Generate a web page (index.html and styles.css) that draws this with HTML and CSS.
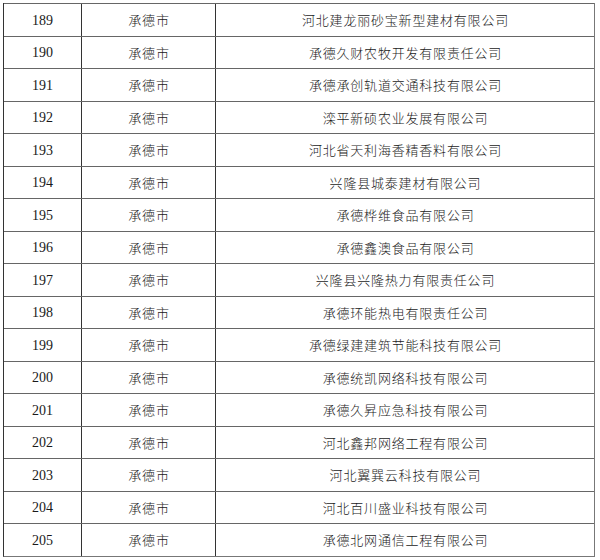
FILE: index.html
```html
<!DOCTYPE html>
<html lang="zh-CN">
<head>
<meta charset="utf-8">
<link rel="stylesheet" href="styles.css">
</head>
<body>
<div class="table">
  <div class="row"><div class="num">189</div><div class="city">承德市</div><div class="co">河北建龙丽砂宝新型建材有限公司</div></div>
  <div class="row"><div class="num">190</div><div class="city">承德市</div><div class="co">承德久财农牧开发有限责任公司</div></div>
  <div class="row"><div class="num">191</div><div class="city">承德市</div><div class="co">承德承创轨道交通科技有限公司</div></div>
  <div class="row"><div class="num">192</div><div class="city">承德市</div><div class="co">滦平新硕农业发展有限公司</div></div>
  <div class="row"><div class="num">193</div><div class="city">承德市</div><div class="co">河北省天利海香精香料有限公司</div></div>
  <div class="row"><div class="num">194</div><div class="city">承德市</div><div class="co">兴隆县城泰建材有限公司</div></div>
  <div class="row"><div class="num">195</div><div class="city">承德市</div><div class="co">承德桦维食品有限公司</div></div>
  <div class="row"><div class="num">196</div><div class="city">承德市</div><div class="co">承德鑫澳食品有限公司</div></div>
  <div class="row"><div class="num">197</div><div class="city">承德市</div><div class="co">兴隆县兴隆热力有限责任公司</div></div>
  <div class="row"><div class="num">198</div><div class="city">承德市</div><div class="co">承德环能热电有限责任公司</div></div>
  <div class="row"><div class="num">199</div><div class="city">承德市</div><div class="co">承德绿建建筑节能科技有限公司</div></div>
  <div class="row"><div class="num">200</div><div class="city">承德市</div><div class="co">承德统凯网络科技有限公司</div></div>
  <div class="row"><div class="num">201</div><div class="city">承德市</div><div class="co">承德久昇应急科技有限公司</div></div>
  <div class="row"><div class="num">202</div><div class="city">承德市</div><div class="co">河北鑫邦网络工程有限公司</div></div>
  <div class="row"><div class="num">203</div><div class="city">承德市</div><div class="co">河北翼巽云科技有限公司</div></div>
  <div class="row"><div class="num">204</div><div class="city">承德市</div><div class="co">河北百川盛业科技有限公司</div></div>
  <div class="row"><div class="num">205</div><div class="city">承德市</div><div class="co">承德北网通信工程有限公司</div></div>
</div>
</body>
</html>
```
FILE: styles.css
```css
html, body {
  margin: 0;
  padding: 0;
  background: #fff;
}
body {
  padding: 3px 0 0 3px;
}
.table {
  width: 592px;
  border-left: 1px solid #333;
  border-right: 1px solid #777;
  border-bottom: 1px solid #777;
  box-sizing: border-box;
  color: #1a1a1a;
}
.row {
  display: grid;
  grid-template-columns: 78px 134px 1fr;
  height: 32.5px;
  border-top: 1px solid #666;
  box-sizing: border-box;
}
.row > div {
  display: flex;
  align-items: center;
  justify-content: center;
}
.num {
  font-family: "Liberation Serif", "Times New Roman", serif;
  font-size: 14px;
  padding-top: 2px;
  border-right: 1px solid #333;
}
.city, .co {
  font-family: "Noto Sans CJK SC", sans-serif;
  font-size: 13px;
  letter-spacing: 0.8px;
  font-weight: 300;
  padding-left: 1px;
}
.city {
  border-right: 1px solid #333;
}
```
